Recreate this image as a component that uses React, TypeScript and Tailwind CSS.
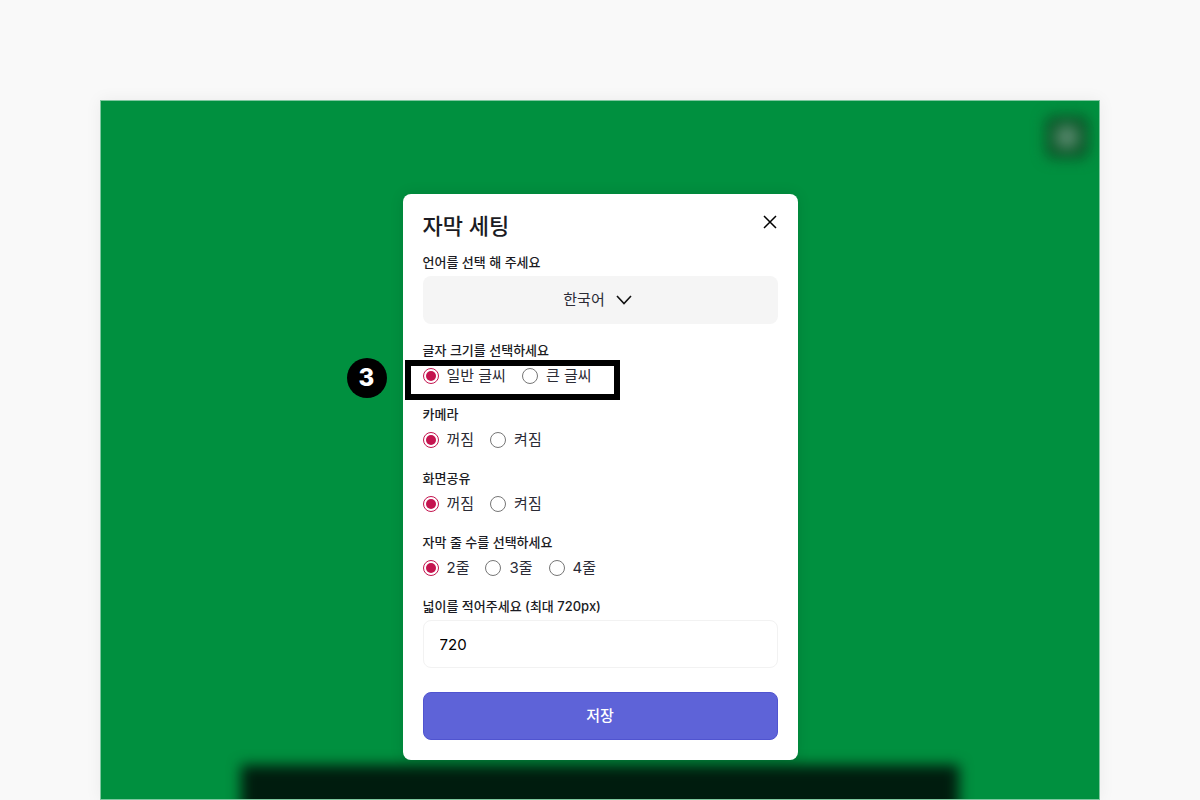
import React, { useState } from "react";

const groups = [
  { name: "fontSize", label: "글자 크기를 선택하세요", options: ["일반 글씨", "큰 글씨"], marker: "3" },
  { name: "camera", label: "카메라", options: ["꺼짐", "켜짐"] },
  { name: "screenShare", label: "화면공유", options: ["꺼짐", "켜짐"] },
  { name: "lines", label: "자막 줄 수를 선택하세요", options: ["2줄", "3줄", "4줄"] },
];

type RadioGroupProps = {
  name: string;
  label: string;
  options: string[];
  marker?: string;
};

const RadioGroup = ({ name, label, options, marker }: RadioGroupProps) => {
  const [selected, setSelected] = useState(options[0]);

  return (
    <fieldset className="mb-4">
      <legend className="text-[13px] leading-5 font-medium">{label}</legend>
      <div className="relative mt-1 flex h-6 items-center gap-4">
        {options.map((option) => (
          <label key={option} className="flex items-center gap-2 text-[15px] leading-6 text-[#2b2b35]">
            <input
              type="radio"
              name={name}
              checked={selected === option}
              onChange={() => setSelected(option)}
              className="size-4 appearance-none rounded-full border border-[#767676] bg-clip-content p-0.5 checked:border-[#c4144f] checked:bg-[#c4144f]"
            />
            {option}
          </label>
        ))}
        {marker && (
          <>
            <span className="pointer-events-none absolute -top-1 -left-[18px] h-10 w-[215px] border-6 border-black" />
            <span className="absolute -top-1.5 -left-[76px] flex size-10 items-center justify-center rounded-full bg-black text-2xl font-extrabold text-white">
              {marker}
            </span>
          </>
        )}
      </div>
    </fieldset>
  );
};

const App = () => {
  const [width, setWidth] = useState("720");

  return (
    <div className="flex min-h-screen flex-col bg-[#f9f9f9] px-[100px] pt-[100px] font-['Inter','Noto_Sans_CJK_KR',sans-serif] text-[#1b1b23]">
      <main className="relative flex flex-1 items-start justify-center overflow-hidden border border-[#7fc79f] bg-[#00903f] shadow-[0_0_16px_rgba(0,0,0,0.06)]">
        {/* blurred caption screen behind the dialog */}
        <div className="absolute top-3.5 right-2.5 size-11 rounded-lg bg-[#0c5a2b] blur-[7px]" />
        <div className="absolute top-6 right-5 size-6 rounded-full bg-[#55866a] blur-[7px]" />
        <div className="absolute inset-x-[14%] -bottom-10 h-[74px] bg-[#001c0e] blur-[7px]" />

        <form
          role="dialog"
          aria-labelledby="dialog-title"
          onSubmit={(e) => e.preventDefault()}
          className="relative mt-[93px] mb-[39px] w-full max-w-[395px] rounded-lg bg-white px-5 pt-4 pb-5 shadow-[0_0_14px_rgba(0,0,0,0.12)]"
        >
          <div className="mb-2.5 flex items-start justify-between">
            <h1 id="dialog-title" className="text-[22px] leading-8 font-medium">
              자막 세팅
            </h1>
            <button type="button" aria-label="닫기" className="flex h-6 w-4 items-center justify-center">
              <svg width="14" height="14" viewBox="0 0 14 14" fill="none" stroke="#000" strokeWidth="1.5">
                <path d="M1 1l12 12M13 1L1 13" />
              </svg>
            </button>
          </div>

          <label htmlFor="language" className="block text-[13px] leading-5 font-medium">
            언어를 선택 해 주세요
          </label>
          <div className="relative mt-1 mb-4">
            <select
              id="language"
              className="h-12 w-full appearance-none rounded-lg bg-[#f5f5f5] pr-8 text-center text-[15px] text-[#2b2b35] [text-align-last:center]"
            >
              <option>한국어</option>
            </select>
            <span className="pointer-events-none absolute inset-0 flex items-center justify-center pl-12">
              <svg width="16" height="10" viewBox="0 0 16 10" fill="none" stroke="#111" strokeWidth="1.6">
                <path d="M1 1l7 7.5L15 1" />
              </svg>
            </span>
          </div>

          {groups.map((group) => (
            <RadioGroup key={group.name} {...group} />
          ))}

          <label htmlFor="width" className="block text-[13px] leading-5 font-medium">
            넓이를 적어주세요 (최대 720px)
          </label>
          <input
            id="width"
            type="text"
            value={width}
            onChange={(e) => setWidth(e.target.value)}
            className="mt-1 mb-6 block h-12 w-full rounded-lg border border-[#f2f2f2] bg-white px-4 text-[15px] text-black"
          />
          <button
            type="submit"
            className="block h-12 w-full rounded-lg border border-[#5054d0] bg-[#5e63d8] text-[15px] font-medium text-white"
          >
            저장
          </button>
        </form>
      </main>
    </div>
  );
};

export default App;
